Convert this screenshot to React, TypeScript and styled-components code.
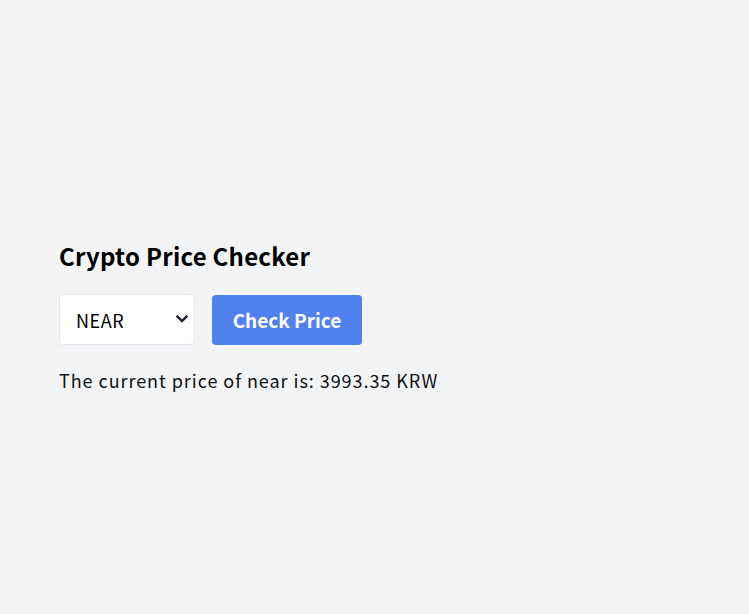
import React, { useState } from "react";
import styled, { createGlobalStyle } from "styled-components";

const Global = createGlobalStyle`
  html, body { margin: 0; padding: 0; background: #f3f4f6; }
  body { font-family: "Noto Sans CJK KR", "Noto Sans", sans-serif; color: #111; }
`;

const Page = styled.main`
  min-height: 614px;
  box-sizing: border-box;
  padding: 238px 59px 0;
`;

const Title = styled.h1`
  margin: 0 0 20px;
  font-size: 24px;
  line-height: 36px;
  font-weight: 700;
  color: #000;
  letter-spacing: 0.25px;
`;

const Row = styled.div`
  display: flex;
  align-items: center;
  gap: 17px;
`;

const SelectWrap = styled.div`
  position: relative;
  width: 136px;
  height: 51px;
`;

const Select = styled.select`
  appearance: none;
  -webkit-appearance: none;
  width: 100%;
  height: 100%;
  box-sizing: border-box;
  padding: 0 12px 0 16px;
  border: 1px solid #e5e7eb;
  border-radius: 4px;
  background: #fff;
  font-family: inherit;
  font-size: 18px;
  color: #000;
  letter-spacing: 0.6px;
`;

const Chevron = styled.svg`
  position: absolute;
  right: 7px;
  top: 21px;
  width: 12px;
  height: 8px;
  pointer-events: none;
`;

const Button = styled.button`
  width: 150px;
  height: 50px;
  border: none;
  border-radius: 4px;
  background: #5081ee;
  color: #fff;
  font-family: inherit;
  font-size: 19px;
  font-weight: 700;
  cursor: pointer;
`;

const Result = styled.p`
  margin: 21px 0 0;
  font-size: 18px;
  line-height: 28px;
  letter-spacing: 0.95px;
`;

export default function App() {
  const [coin, setCoin] = useState("NEAR");
  return (
    <>
      <Global />
      <Page>
        <Title>Crypto Price Checker</Title>
        <Row>
          <SelectWrap>
            <Select value={coin} onChange={(e) => setCoin(e.target.value)}>
              <option value="BTC">BTC</option>
              <option value="ETH">ETH</option>
              <option value="NEAR">NEAR</option>
            </Select>
            <Chevron viewBox="0 0 12 8">
              <path d="M1.5 1.5 L6 6 L10.5 1.5" fill="none" stroke="#1c1c33" strokeWidth="2.4" strokeLinecap="square" />
            </Chevron>
          </SelectWrap>
          <Button>Check Price</Button>
        </Row>
        <Result>The current price of near is: 3993.35 KRW</Result>
      </Page>
    </>
  );
}
